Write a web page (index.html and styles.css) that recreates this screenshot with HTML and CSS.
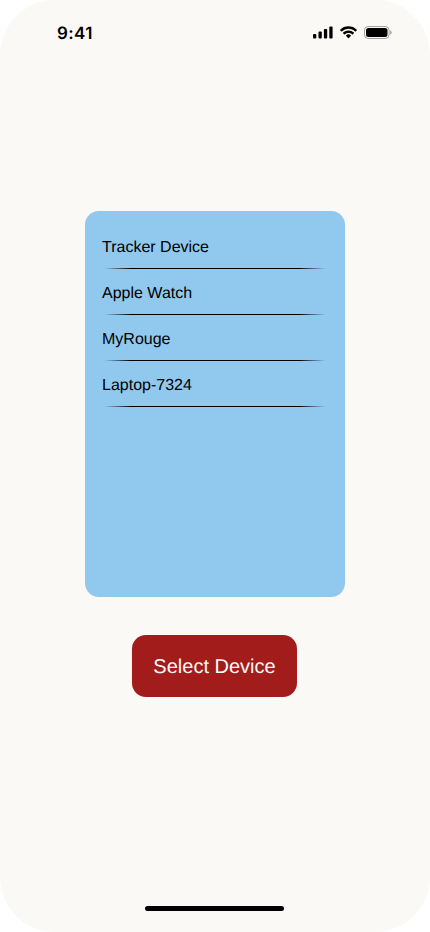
FILE: index.html
```html
<!DOCTYPE html>
<html lang="en">
<head>
<meta charset="utf-8">
<meta name="viewport" content="width=device-width, initial-scale=1">
<title>Select Device</title>
<link rel="stylesheet" href="styles.css">
</head>
<body>
<div class="screen">
  <header class="status-bar">
    <span class="time">9:41</span>
    <div class="status-icons">
      <svg class="signal" width="20" height="13" viewBox="0 0 20 13">
        <rect x="0" y="8" width="3.3" height="4.6" rx="1"/>
        <rect x="5.5" y="5.6" width="3.3" height="7" rx="1"/>
        <rect x="10.9" y="3" width="3.3" height="9.6" rx="1"/>
        <rect x="16.3" y="0.4" width="3.3" height="12.2" rx="1"/>
      </svg>
      <svg class="wifi" width="17" height="13" viewBox="0 0 17.2 12.4">
        <path d="M8.57 2.47c2.49 0 4.88.96 6.69 2.67.13.13.35.13.48 0l1.3-1.31a.36.36 0 0 0 0-.51 12.2 12.2 0 0 0-16.94 0 .36.36 0 0 0 0 .51l1.3 1.31c.13.13.35.13.48 0a9.7 9.7 0 0 1 6.69-2.67Z"/>
        <path d="M8.57 6.73c1.36 0 2.68.51 3.69 1.43.14.13.35.13.49 0l1.3-1.32a.37.37 0 0 0 0-.52 7.95 7.95 0 0 0-10.95 0 .37.37 0 0 0 0 .52l1.3 1.32c.13.13.35.13.48 0a5.48 5.48 0 0 1 3.69-1.43Z"/>
        <path d="M11.12 9.61c.14-.14.14-.37-.01-.5a3.89 3.89 0 0 0-5.08 0 .35.35 0 0 0-.01.5l2.3 2.32c.14.14.36.14.5 0l2.3-2.32Z"/>
      </svg>
      <svg class="battery" width="28" height="13" viewBox="0 0 28 13">
        <rect x="0.5" y="0.5" width="24.6" height="12" rx="3.8" fill="none" stroke="#000" stroke-opacity=".35"/>
        <path d="M26.2 4.5v4.2c.8-.35 1.4-1.1 1.4-2.1s-.6-1.75-1.4-2.1Z" fill-opacity=".4"/>
        <rect x="2" y="2" width="21.5" height="9" rx="2.5"/>
      </svg>
    </div>
  </header>
  <main class="content">
    <ul class="device-list">
      <li class="device">Tracker Device</li>
      <li class="device">Apple Watch</li>
      <li class="device">MyRouge</li>
      <li class="device">Laptop-7324</li>
    </ul>
    <button class="select-button" type="button">Select Device</button>
  </main>
  <div class="home-indicator"></div>
</div>
</body>
</html>
```
FILE: styles.css
```css
* {
  box-sizing: border-box;
}

body {
  margin: 0;
  background: #fff;
  font-family: "Liberation Sans", Arial, sans-serif;
  text-rendering: geometricPrecision;
}

.screen {
  display: flex;
  flex-direction: column;
  align-items: center;
  width: 430px;
  height: 932px;
  padding-bottom: 21px;
  border-radius: 55px;
  background: #faf9f6;
  overflow: hidden;
}

.status-bar {
  display: flex;
  align-items: center;
  justify-content: space-between;
  width: 100%;
  height: 65px;
  padding: 0 38px 0 57px;
}

.time {
  padding-top: 2px;
  font: 600 17px/22px Inter, sans-serif;
  letter-spacing: 0.4px;
}

.status-icons {
  display: flex;
  align-items: center;
  gap: 7px;
}

.status-icons svg {
  display: block;
}

.content {
  display: flex;
  flex: 1;
  flex-direction: column;
  align-items: center;
  gap: 38px;
  padding-top: 146px;
}

.device-list {
  width: 260px;
  height: 386px;
  margin: 0;
  padding: 12px 17px;
  border-radius: 14px;
  background: #90c8ee;
  list-style: none;
}

.device {
  height: 46px;
  font-size: 16px;
  line-height: 50px;
  background: linear-gradient(to right, transparent 1%, #000 13%, #000 87%, transparent 99%) bottom / 100% 1px no-repeat;
}

.select-button {
  width: 165px;
  height: 62px;
  margin-right: 1px;
  padding: 2px 0 0;
  border: 0;
  border-radius: 14px;
  background: #a31c1c;
  color: #faf9f6;
  font: 20px/60px "Liberation Sans", Arial, sans-serif;
  text-rendering: inherit;
}

.home-indicator {
  width: 139px;
  height: 5px;
  margin-right: 1px;
  border-radius: 3px;
  background: #000;
}
```
